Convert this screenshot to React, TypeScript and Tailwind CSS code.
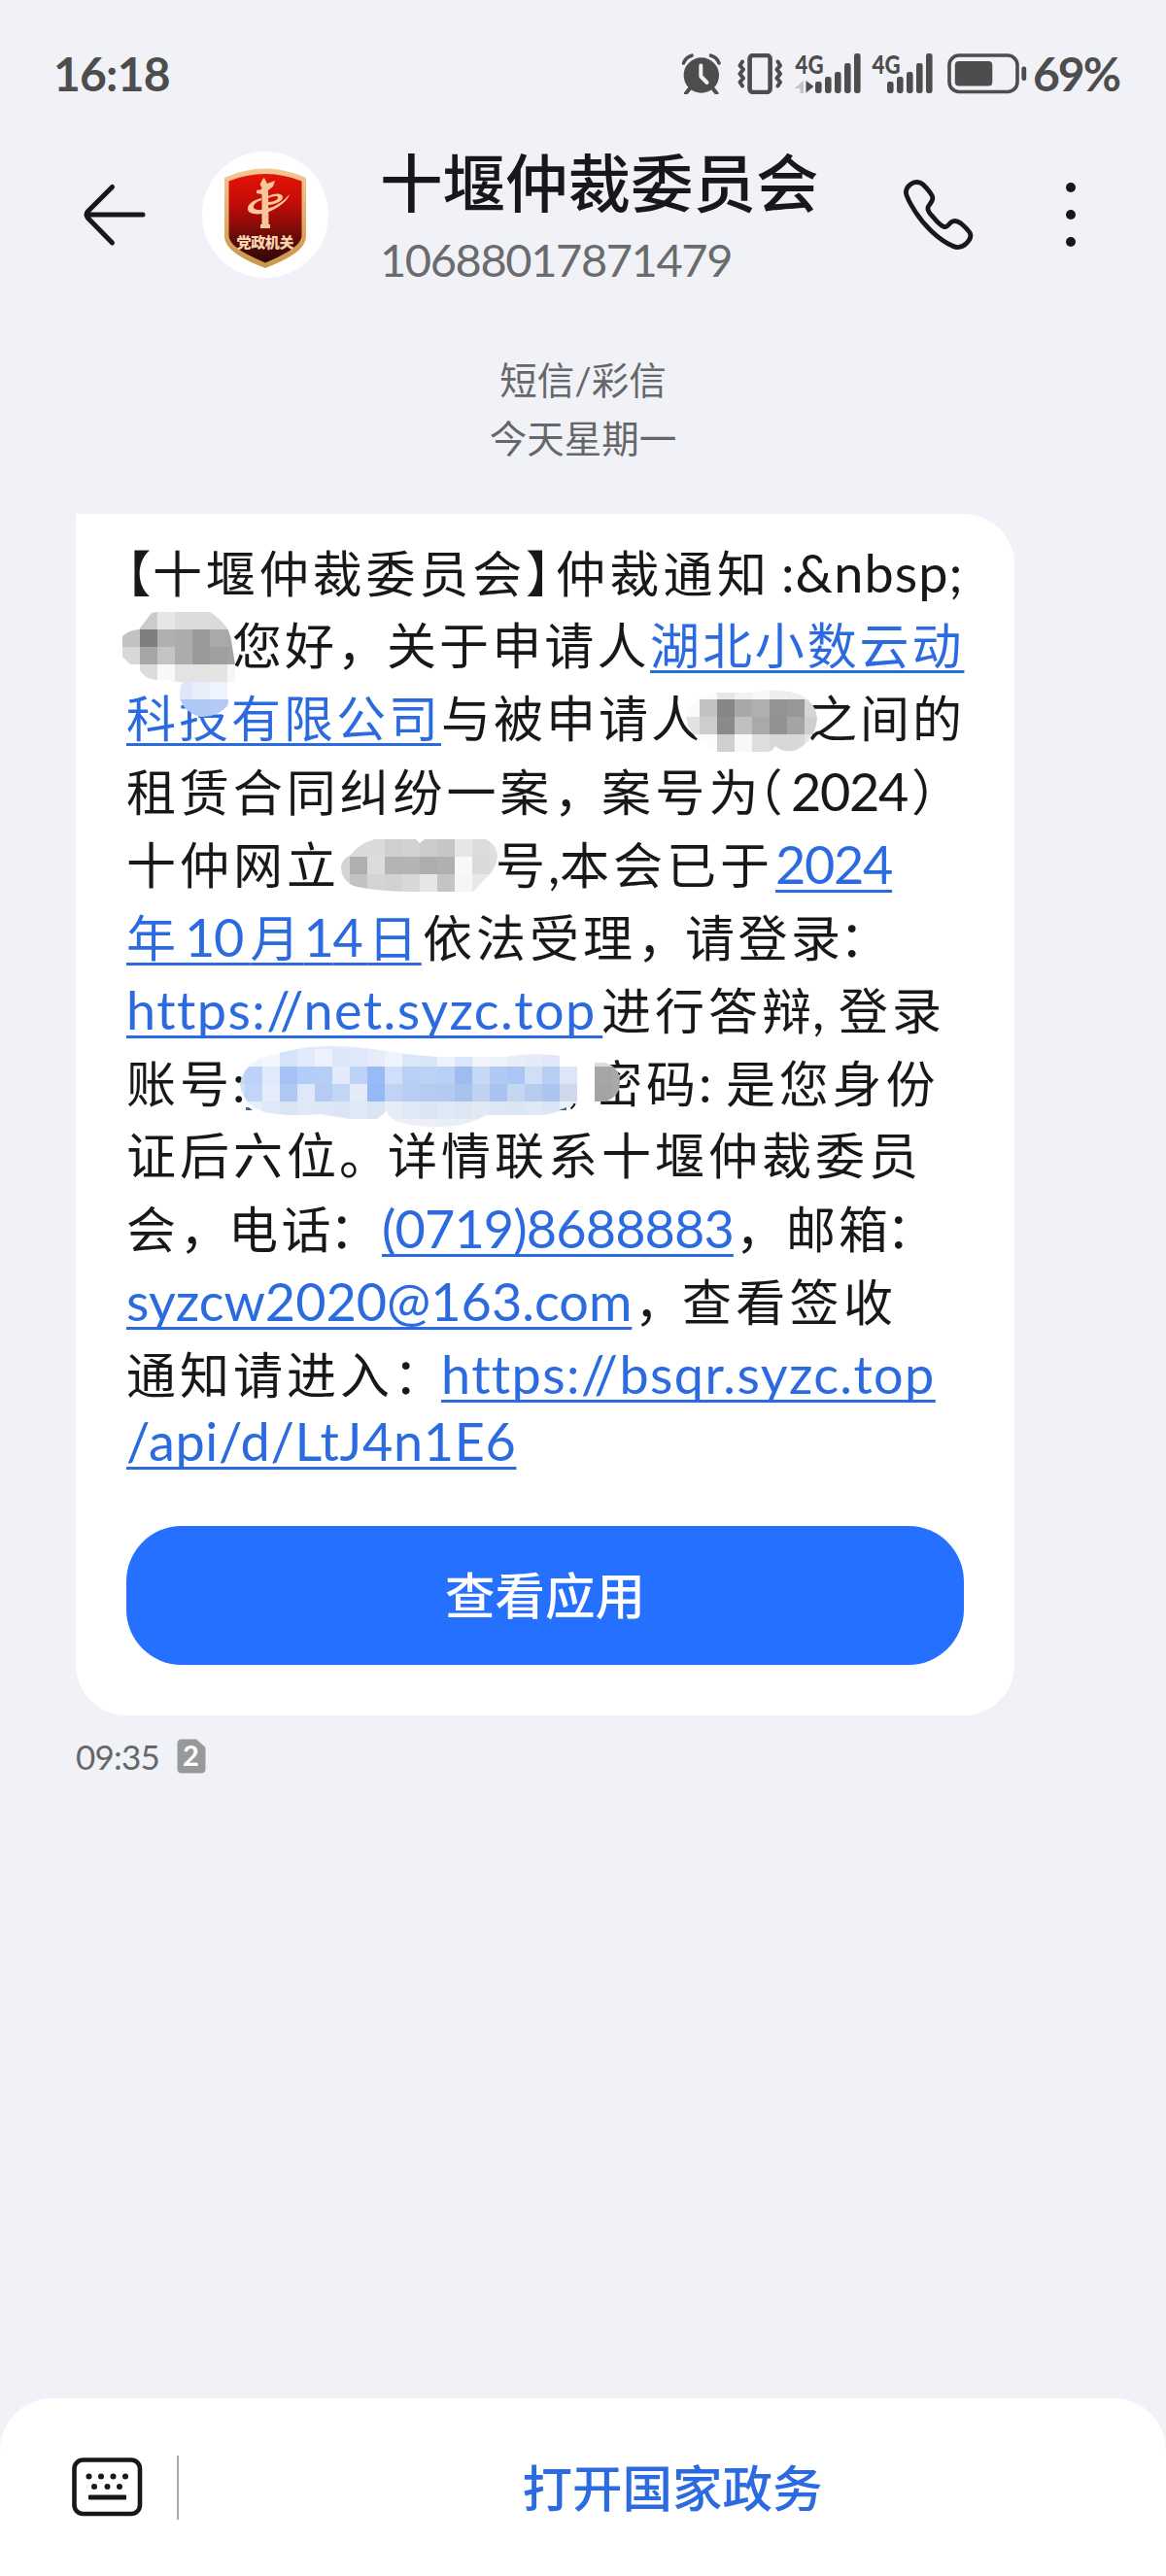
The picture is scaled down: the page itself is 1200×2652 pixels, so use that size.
import type { ReactNode } from "react";

const clock = "text-[#4d4d4d] text-[48px] font-bold leading-none";
const cjk = "text-[51px]";
const latin = "text-[54px]";
const link =
  "text-[#2c6bdf] underline decoration-[3px] underline-offset-[6px] [text-decoration-skip-ink:none]";

function Line({ className = "", children }: { className?: string; children: ReactNode }) {
  return <div className={`flex h-[75px] items-baseline leading-[75px] ${className}`}>{children}</div>;
}

function Seg({ className = "", children }: { className?: string; children?: ReactNode }) {
  return <span className={`block shrink-0 whitespace-pre ${className}`}>{children}</span>;
}

function Link({ className = "", children }: { className?: string; children: ReactNode }) {
  return (
    <Seg className={className}>
      <a href="#" className={link}>
        {children}
      </a>
    </Seg>
  );
}

/* Status bar */

function AlarmIcon() {
  return (
    <svg width="42" height="42" viewBox="0 0 42 42" fill="none">
      <circle cx="20.8" cy="22.5" r="18.2" fill="#4d4d4d" />
      <path d="M2.5 10 A12 12 0 0 1 11 2.2 M39 10 A12 12 0 0 0 30.5 2.2" stroke="#4d4d4d" strokeWidth="3.6" strokeLinecap="round" />
      <path d="M9 36 L5 41 M32.5 36 L36.5 41" stroke="#4d4d4d" strokeWidth="4" strokeLinecap="round" />
      <path d="M20.3 12.5 V23.5 L26.5 30" stroke="#f1f2f7" strokeWidth="4" strokeLinecap="round" strokeLinejoin="round" />
    </svg>
  );
}

function VibrateIcon() {
  return (
    <svg width="48" height="42" viewBox="0 0 48 42" fill="none" stroke="#4d4d4d">
      <rect x="12.6" y="2" width="21" height="38" rx="3.5" strokeWidth="4.6" />
      <path
        d="M5 8.5 L2.5 12.5 L6 16.5 L2.5 21 L6 25.5 L2.5 29.5 L5 33.5 M41.5 8.5 L44 12.5 L40.5 16.5 L44 21 L40.5 25.5 L44 29.5 L41.5 33.5"
        strokeWidth="4"
        strokeLinecap="round"
        strokeLinejoin="round"
      />
    </svg>
  );
}

const bars = [
  { x: 20, h: 12 },
  { x: 30, h: 17 },
  { x: 40, h: 22 },
  { x: 50, h: 31 },
  { x: 60, h: 41 },
];

function Signal({ labelX, arrows = false }: { labelX: number; arrows?: boolean }) {
  return (
    <svg width="67" height="42" viewBox="0 0 67 42" className="overflow-visible" fill="#4d4d4d">
      <text x={labelX} y="20.5" fontSize="27" fontWeight="900" textLength="29" lengthAdjust="spacingAndGlyphs">
        4G
      </text>
      {bars.map((b) => (
        <rect key={b.x} x={b.x} y={41 - b.h} width="6.6" height={b.h} rx="2.4" />
      ))}
      {arrows && (
        <>
          <path d="M8 28 V41 H4.5 V36 H-1.5 Z" fill="#c3c4c7" />
          <path d="M10.5 40.5 V28 L18.5 34 Z" />
        </>
      )}
    </svg>
  );
}

function Battery() {
  return (
    <svg width="82" height="42" viewBox="0 0 82 42" fill="none">
      <rect x="2" y="2" width="70" height="37.5" rx="10" stroke="#4d4d4d" strokeWidth="3.6" />
      <rect x="7.8" y="8" width="38.5" height="25.5" rx="4" fill="#4d4d4d" />
      <rect x="76.4" y="13.5" width="4.8" height="14.5" rx="2.2" fill="#4d4d4d" />
    </svg>
  );
}

function StatusBar() {
  return (
    <div className="flex h-[110px] items-start pl-[55px] pt-[55px]">
      <div className={`${clock} -mt-[3px] w-[646px] tracking-[-0.8px]`}>16:18</div>
      <AlarmIcon />
      <div className="ml-[16px] flex">
        <VibrateIcon />
      </div>
      <div className="ml-[12px] flex">
        <Signal labelX={-0.5} arrows />
      </div>
      <div className="ml-[7px] flex">
        <Signal labelX={4.5} />
      </div>
      <div className="ml-[15px] flex">
        <Battery />
      </div>
      <div className={`${clock} -mt-[3px] ml-[6px] tracking-[-2px]`}>69%</div>
    </div>
  );
}

/* Header */

function Emblem() {
  return (
    <svg width="86" height="104" viewBox="0 0 86 104">
      <defs>
        <linearGradient id="gold" x1="0" y1="0" x2="0" y2="1">
          <stop offset="0" stopColor="#f6c795" />
          <stop offset="0.6" stopColor="#dfa663" />
          <stop offset="1" stopColor="#c8964a" />
        </linearGradient>
        <linearGradient id="red" x1="0" y1="0" x2="0" y2="1">
          <stop offset="0" stopColor="#e51207" />
          <stop offset="0.35" stopColor="#c00c06" />
          <stop offset="0.7" stopColor="#6b0b08" />
          <stop offset="1" stopColor="#2a0806" />
        </linearGradient>
      </defs>
      <path d="M1 10 Q22 0.5 43 0.5 Q64 0.5 85 10 V70 C85 84 66 94 43 103 C20 94 1 84 1 70 Z" fill="url(#gold)" />
      <path d="M5.5 13.5 Q24 6 43 6 Q62 6 80.5 13.5 V69 C80.5 80 64 88.5 43 97.5 C22 88.5 5.5 80 5.5 69 Z" fill="url(#red)" />
      <g fill="#f9c79a">
        <path d="M39.5 20 L37.5 17 L40 12 L42 10 L45 16 L53 13 L51 19 L46 23 L46.5 58 H48 V62 H38 V58 H39.5 V27 L34 26 V23 L39 22 Z" />
        <path d="M39 31 C30 33 24 38 25 43 C27 49 42 49 53 42 C62 37 67 31 68 27 C61 35 53 40 44 42 C36 44 30 43 31 39 C32 36 36 34 39 33 Z" />
        <path d="M46 29 C53 25 61 26 61 30 C61 34 53 38 46 38 V35 C52 35 57 32 56 30 C55 28 50 29 46 31 Z" />
      </g>
      <text x="43" y="82" textAnchor="middle" fontSize="15" fontWeight="900" fill="#f9d3ae" textLength="59" className="font-['Noto_Sans_CJK_SC']">
        党政机关
      </text>
    </svg>
  );
}

function Header() {
  return (
    <header className="flex h-[222px] items-center">
      <svg className="ml-[84px]" width="68" height="66" viewBox="0 0 68 66" fill="none" stroke="#17181a" strokeWidth="5" strokeLinecap="round" strokeLinejoin="round">
        <path d="M63 33 H5 M31.5 4.5 L6.5 29.5 Q3.5 33 6.5 36.5 L31.5 62" />
      </svg>
      <div className="ml-[56px] flex size-[130px] items-center justify-center rounded-full bg-white pt-[8px]">
        <Emblem />
      </div>
      <div className="ml-[53px] w-[501px] pt-[10px]">
        <h1 className="text-[64.5px] font-medium leading-[76px] text-[#17181a]">十堰仲裁委员会</h1>
        <p className="mt-[6px] text-[47px] leading-[70px] tracking-[-1.4px] text-[#6a6b6e]">10688017871479</p>
      </div>
      <svg className="ml-[36px]" width="76" height="76" viewBox="928 183 76 76" fill="none" stroke="#17181a" strokeWidth="4.8" strokeLinejoin="round">
        <path d="M937.5 189.5 C941 186.5 947 187 950 190 C954 194 958 199 959.5 202 C961 206 958 209 956 211.5 C953 215 956 219 960 223 C964 228 969 232.5 971.5 233.5 C974 234.5 976 232 978 229.5 C981 226.5 985 227 989 230 C993 233.5 997 237 998.5 240.5 C1000 245 997 248 994 251 C990 255 985 255.5 980 253 C966 247 951 232 942 218 C937 210 933 203 932.5 199 C932 195 934 192 937.5 189.5 Z" />
      </svg>
      <svg className="ml-[92px]" width="12" height="70" viewBox="0 0 12 70" fill="#17181a">
        <circle cx="6" cy="7" r="5" />
        <circle cx="6" cy="35" r="5" />
        <circle cx="6" cy="63" r="5" />
      </svg>
    </header>
  );
}

/* Pixelated patches over the private parts of the message */

const patches = [
  {
    id: "name",
    x: 126,
    y: 630,
    clip: "M143 648 L156 631 Q160 630 164 630 H216 Q226 636 234 647 Q238 655 239 666 L242 684 V702 H186 Q178 702 172 700 Q150 702 144 690 V684 H134 L126 676 V655 Q132 649 143 648 Z",
    rows: [
      ["#d0d0d0", "#cbcbcb", "#e6e6e6", "#dcdcdc", "#dcdcdc", "#dadada", "#d6d6d6"],
      ["#c2c2c2", "#7f7f7f", "#b0b0b0", "#acacac", "#9a9a9a", "#a9a9a9", "#a8a8a8"],
      ["#d8d8d8", "#a6a6a6", "#c4c4c4", "#acacac", "#999999", "#9f9f9f", "#a2a2a2"],
      ["#e8e8e8", "#dcdcdc", "#f8f8f8", "#e3e3e3", "#e3e3e3", "#e3e3e3", "#f6f6f6"],
    ],
  },
  {
    id: "company",
    x: 180,
    y: 702,
    clip: "M188 702 H234 V716 Q236 722 234 727 Q222 739 206 738 Q188 732 185 718 Q184 708 188 702 Z",
    rows: [
      ["#dfe6fb", "#e8effc", "#eef3fd", "#f4f7fe"],
      ["#b0c8f4", "#b0c8f4", "#b2caf5", "#b6cdf6"],
    ],
  },
  {
    id: "respondent",
    x: 702,
    y: 702,
    clip: "M706 738 Q708 728 720 718 L738 713 H774 Q800 708 820 714 Q840 722 841 740 Q839 762 820 772 Q806 776 798 768 Q794 774 790 774 H738 L722 764 Q708 754 706 738 Z",
    rows: [
      ["#fafafa", "#fafafa", "#e6e6e6", "#f2f2f2", "#f8f8f8", "#eeeeee", "#ececec", "#f4f4f4"],
      ["#fafafa", "#c2c2c2", "#868686", "#a8a8a8", "#b0b0b0", "#939393", "#989898", "#d6d6d6"],
      ["#e2e2e2", "#cdcdcd", "#8a8a8a", "#c0c0c0", "#a9a9a9", "#929292", "#a4a4a4", "#cfcfcf"],
      ["#ffffff", "#fcfcfc", "#cfcfcf", "#f8f8f8", "#dedede", "#d8d8d8", "#d8d8d8", "#e6e6e6"],
    ],
  },
  {
    id: "case",
    x: 342,
    y: 864,
    clip: "M386 864 H428 L432 868 L437 864 H500 Q512 870 512 882 Q511 894 502 902 L487 918 H420 Q382 917 364 912 Q351 906 351 892 Q352 884 361 880 Q370 868 386 864 Z",
    rows: [
      ["#dadada", "#dadada", "#dadada", "#cfcfcf", "#d2d2d2", "#cccccc", "#c6c6c6", "#e6e6e6", "#dcdcdc", "#e0e0e0"],
      ["#d4d4d4", "#afafaf", "#dcdcdc", "#b4b4b4", "#b4b4b4", "#adadad", "#b0b0b0", "#f8f8f8", "#dadada", "#dedede"],
      ["#d4d4d4", "#c2c2c2", "#d4d4d4", "#d2d2d2", "#d8d8d8", "#e6e6e6", "#c4c4c4", "#f6f6f6", "#e8e8e8", "#e8e8e8"],
    ],
  },
  {
    id: "account",
    x: 234,
    y: 1062,
    clip: "M247 1116 Q250 1098 268 1090 Q290 1082 318 1078 Q352 1075 384 1080 Q420 1086 450 1088 H520 Q548 1083 576 1087 V1080 H594 V1137 L578 1143 Q566 1148 552 1148 H500 Q482 1160 450 1160 Q402 1160 398 1144 L388 1152 H360 L330 1147 Q296 1150 272 1145 Q250 1138 247 1116 Z",
    rows: [
      ["#fff", "#fff", "#fff", "#e4ecf9", "#e2eafa", "#e2eafa", "#e2eafa", "#e2eafa", "#e6ecfa", "#fff", "#fff", "#fff", "#fff", "#fff", "#fff", "#fff", "#fff", "#fff", "#fff", "#fff"],
      ["#fff", "#eef4fd", "#f2f6fe", "#d4e2fa", "#e0eafb", "#eef1fc", "#dde7fa", "#dfe8fa", "#e8ecfa", "#eff3fc", "#dbe6f8", "#d9e5f8", "#edf2fc", "#dbe6fb", "#f0f3fb", "#eef2fb", "#e6edf9", "#e4eaf8", "#dfe8f7", "#ffffff"],
      ["#c8d8f4", "#bcd2f8", "#e0eafc", "#a6c2f4", "#b3cdf8", "#b5cef8", "#e2eafb", "#bcd2f7", "#98bbf5", "#cfdff9", "#b9d0f6", "#bbd2f7", "#b8cff6", "#9fbcf0", "#c6d8f5", "#afc9f4", "#acc6f3", "#d0dff7", "#b8cff4", "#dbe6f8"],
      ["#d2dff4", "#c2d5f6", "#e5edfb", "#afc8f3", "#dfe8fa", "#b5cbf3", "#c2d5f4", "#e4eaf6", "#95b9f6", "#c0d3f5", "#b8cef3", "#b5cbf2", "#b3caf3", "#a8c2ee", "#c0d2f0", "#a9c3f1", "#c5d6f1", "#b6ccee", "#abc4f0", "#cdd8ec"],
      ["#e4ecf8", "#e6eefa", "#dfe8f7", "#d9e4f5", "#e0e8f6", "#dde7f6", "#dbe5f4", "#dfe8f6", "#dbe6f5", "#e6edf8", "#dfe8f6", "#dbe6f5", "#dfe8f5", "#dde6f3", "#e2e9f4", "#dce6f4", "#dbe6f5", "#dfe8f6", "#dbe6f5", "#eef2f8"],
      ["#fff", "#fff", "#fff", "#fff", "#fff", "#fff", "#dfe8f6", "#dfe8f6", "#dfe8f6", "#eceff5", "#eceff5", "#eceff5", "#eaeef5", "#eaeef5", "#eef1f6", "#fff", "#fff", "#fff", "#fff", "#fff"],
    ],
  },
  {
    id: "comma",
    x: 612,
    y: 1080,
    clip: "M612 1094 H622 Q638 1098 638 1114 Q638 1130 622 1134 H612 Z",
    rows: [
      ["#dcdcdc", "#dcdcdc"],
      ["#a6a6a6", "#a9a9a9"],
      ["#a4a4a4", "#a8a8a8"],
    ],
  },
];

function Mosaic() {
  return (
    <svg className="pointer-events-none absolute left-0 top-0" width="966" height="1000" viewBox="78 529 966 1000">
      {patches.map((p) => (
        <g key={p.id} clipPath={`url(#${p.id})`} shapeRendering="crispEdges">
          <clipPath id={p.id}>
            <path d={p.clip} />
          </clipPath>
          {p.rows.map((row, r) =>
            row.map((fill, c) => (
              <rect key={`${r}-${c}`} x={p.x + c * 18} y={p.y + r * 18} width="18" height="18" fill={fill} />
            ))
          )}
        </g>
      ))}
      {/* edges of the covered link that stay visible */}
      <path d="M253 1140 H256 L260 1143 H253 Z M575 1143 L583 1140 V1143 Z" fill="#3c64a8" />
      <path d="M591.5 1136 Q591 1139 587.500 1141.500" fill="none" stroke="#17181a" strokeWidth="2" />
    </svg>
  );
}

/* Message */

function Message() {
  return (
    <div className="relative ml-[78px] mt-[47px] h-[1237px] w-[966px] rounded-[52px] rounded-tl-none bg-white pl-[52px] pr-[52px] pt-[23px] text-[#17181a]">
      <Line>
        <Seg className={`${cjk} w-[27px] [font-feature-settings:'halt']`}>【</Seg>
        <Seg className={`${cjk} w-[384px] tracking-[3.86px]`}>十堰仲裁委员会</Seg>
        <Seg className={`${cjk} w-[31px] [font-feature-settings:'halt']`}>】</Seg>
        <Seg className={`${cjk} w-[232px] tracking-[4.3px]`}>仲裁通知</Seg>
        <Seg className={`${latin} tracking-[1.1px]`}>:&amp;nbsp;</Seg>
      </Line>
      <Line>
        <Seg className="w-[109px]" />
        <Seg className={`${cjk} w-[108px] tracking-[3px]`}>您好</Seg>
        <Seg className={`${cjk} w-[51px]`}>，</Seg>
        <Seg className={`${cjk} w-[271px] tracking-[3.1px]`}>关于申请人</Seg>
        <Link className={`${cjk} tracking-[2.9px]`}>湖北小数云动</Link>
      </Line>
      <Line>
        <Link className={`${cjk} w-[324px] tracking-[3px]`}>科技有限公司</Link>
        <Seg className={`${cjk} w-[377px] tracking-[3px]`}>与被申请人</Seg>
        <Seg className={`${cjk} tracking-[3px]`}>之间的</Seg>
      </Line>
      <Line>
        <Seg className={`${cjk} w-[440px] tracking-[3.9px]`}>租赁合同纠纷一案</Seg>
        <Seg className={`${cjk} w-[49px]`}>，</Seg>
        <Seg className={`${cjk} w-[161px] tracking-[4.3px]`}>案号为</Seg>
        <Seg className={`${cjk} w-[34px] [font-feature-settings:'halt']`}>（</Seg>
        <Seg className={`${latin} w-[124px] tracking-[-1.3px]`}>2024</Seg>
        <Seg className={`${cjk} [font-feature-settings:'halt']`}>）</Seg>
      </Line>
      <Line>
        <Seg className={`${cjk} w-[380px] tracking-[4px]`}>十仲网立</Seg>
        <Seg className={`${cjk} w-[54px]`}>号</Seg>
        <Seg className={`${latin} w-[12px]`}>,</Seg>
        <Seg className={`${cjk} w-[222px] tracking-[4px]`}>本会已于</Seg>
        <Link className={`${latin} tracking-[-1.3px]`}>2024</Link>
      </Line>
      <Line>
        <Link className={`${cjk} w-[305px]`}>
          <span className="tracking-[9px]">年</span>
          <span className="text-[54px] tracking-[-1.3px]">1</span>
          <span className="text-[54px] tracking-[6px]">0</span>
          <span className="tracking-[4px]">月</span>
          <span className="text-[54px] tracking-[-1.3px]">1</span>
          <span className="text-[54px] tracking-[5px]">4</span>
          <span className="tracking-[4px]">日</span>
        </Link>
        <Seg className={`${cjk} w-[221px] tracking-[4px]`}>依法受理</Seg>
        <Seg className={`${cjk} w-[49px]`}>，</Seg>
        <Seg className={`${cjk} w-[159px] tracking-[3.5px]`}>请登录</Seg>
        <Seg className={cjk}>：</Seg>
      </Line>
      <Line>
        <Link className={`${latin} w-[489px] tracking-[1.45px]`}>
          https://net.syzc.to<span className="tracking-[8px]">p</span>
        </Link>
        <Seg className={`${cjk} w-[217px] tracking-[4px]`}>进行答辩</Seg>
        <Seg className={`${latin} w-[27px]`}>,</Seg>
        <Seg className={`${cjk} tracking-[4px]`}>登录</Seg>
      </Line>
      <Line>
        <Seg className={`${cjk} w-[109px] tracking-[4px]`}>账号</Seg>
        <Seg className={`${latin} w-[371px]`}>:</Seg>
        <Seg className={`${cjk} w-[109px] tracking-[4px]`}>密码</Seg>
        <Seg className={`${latin} w-[28px]`}>:</Seg>
        <Seg className={`${cjk} tracking-[3.8px]`}>是您身份</Seg>
      </Line>
      <Line>
        <Seg className={`${cjk} w-[219px] tracking-[4px]`}>证后六位</Seg>
        <Seg className={`${cjk} w-[50px]`}>。</Seg>
        <Seg className={`${cjk} tracking-[4px]`}>详情联系十堰仲裁委员</Seg>
      </Line>
      <Line>
        <Seg className={`${cjk} w-[55px]`}>会</Seg>
        <Seg className={`${cjk} w-[50px]`}>，</Seg>
        <Seg className={`${cjk} w-[104px] tracking-[3.5px]`}>电话</Seg>
        <Seg className={`${cjk} w-[54px]`}>：</Seg>
        <Link className={`${latin} w-[364px] tracking-[-0.88px]`}>(0719)8688883</Link>
        <Seg className={`${cjk} w-[52px]`}>，</Seg>
        <Seg className={`${cjk} w-[103px] tracking-[3px]`}>邮箱</Seg>
        <Seg className={cjk}>：</Seg>
      </Line>
      <Line>
        <Link className={`${latin} w-[523px]`}>syzcw2020@163.com</Link>
        <Seg className={`${cjk} w-[49px]`}>，</Seg>
        <Seg className={`${cjk} tracking-[4.3px]`}>查看签收</Seg>
      </Line>
      <Line>
        <Seg className={`${cjk} w-[275px] tracking-[4px]`}>通知请进入</Seg>
        <Seg className={`${cjk} w-[49px]`}>：</Seg>
        <Link className={`${latin} tracking-[1.38px]`}>https://bsqr.syzc.top</Link>
      </Line>
      <Line className="-mt-[6px]">
        <Link className={`${latin} tracking-[0.65px]`}>/api/d/LtJ4n1E6</Link>
      </Line>
      <button className="mt-[50px] flex h-[143px] w-[862px] items-center justify-center rounded-[57px] bg-[#2570ff] text-[51.5px] font-medium leading-none text-white">
        查看应用
      </button>
      <Mosaic />
    </div>
  );
}

export default function App() {
  return (
    <div className="flex h-[2652px] w-[1200px] flex-col overflow-hidden bg-[#f1f2f7] font-[Lato,'Noto_Sans_CJK_SC',sans-serif] [font-variant-ligatures:none]">
      <StatusBar />
      <Header />

      <div className="mt-[28px] flex h-[122px] flex-col items-center justify-center text-[38.5px] leading-[60px] text-[#666769]">
        <span>短信/彩信</span>
        <span>今天星期一</span>
      </div>

      <Message />

      <div className="ml-[78px] mt-[22px] flex h-[40px] items-center">
        <span className="text-[35px] leading-none tracking-[-0.8px] text-[#666769]">09:35</span>
        <svg className="ml-[18px]" width="30" height="36" viewBox="0 0 30 36">
          <path d="M5 0.5 H20 L29.5 9 V31 Q29.5 35.5 25 35.5 H5 Q0.5 35.5 0.5 31 V5 Q0.5 0.5 5 0.5 Z" fill="#98999c" />
          <text x="14.5" y="28" textAnchor="middle" fontSize="29" fontWeight="700" fill="#fff">
            2
          </text>
        </svg>
      </div>

      {/* Bottom bar */}
      <footer className="mt-auto flex h-[183px] items-start rounded-t-[54px] bg-white pl-[74px]">
        <svg className="mt-[61px]" width="73" height="61" viewBox="0 0 73 61">
          <rect x="2.5" y="2.5" width="67.5" height="55.5" rx="9" fill="none" stroke="#17181a" strokeWidth="4.6" />
          <g fill="#17181a">
            {[17.5, 30, 42.5, 55].map((x) => (
              <circle key={x} cx={x} cy="19.5" r="3" />
            ))}
            {[23, 36.5, 49].map((x) => (
              <circle key={x} cx={x} cy="30" r="3" />
            ))}
            <rect x="17" y="38.5" width="39" height="5" rx="1" />
          </g>
        </svg>
        <div className="ml-[35px] mt-[59px] h-[66px] w-[2px] bg-[#a9aaac]" />
        <div className="mt-[59px] flex-1 text-center text-[51.5px] font-medium leading-[66px] text-[#2c6bdf]">打开国家政务</div>
      </footer>
    </div>
  );
}
